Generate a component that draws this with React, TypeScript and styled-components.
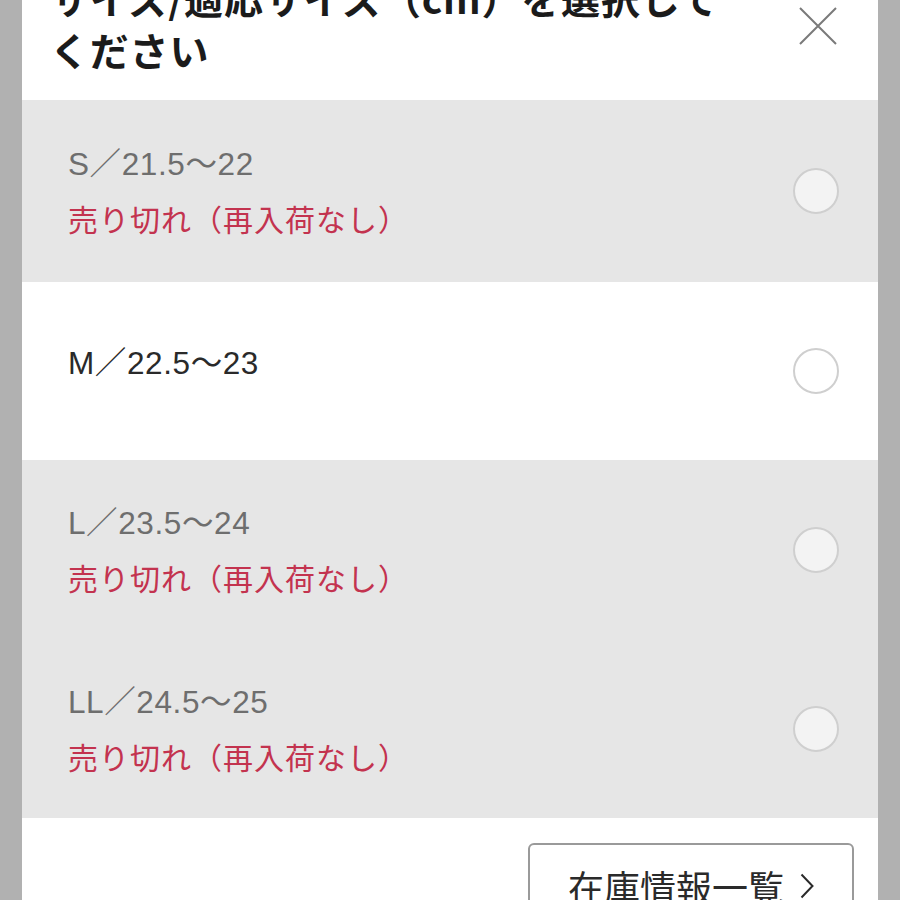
import React from "react";
import styled, { createGlobalStyle } from "styled-components";

const Global = createGlobalStyle`
  html, body { margin: 0; padding: 0; background: #b1b1b1; }
  body { font-family: "Noto Sans CJK JP", "Noto Sans", sans-serif; }
`;

const Screen = styled.div`
  height: 900px;
  overflow: hidden;
  background: #b1b1b1;
  padding: 0 22px;
`;

const Panel = styled.div`
  margin-top: -29px;
  background: #ffffff;
  display: flex;
  flex-direction: column;
`;

const Header = styled.div`
  display: flex;
  justify-content: space-between;
  align-items: flex-start;
  padding: 0 41px 25px 28px;
`;

const Title = styled.h2`
  margin: 0;
  font-size: 39px;
  line-height: 52px;
  font-weight: 700;
  color: #1b1b1b;
  white-space: pre-line;
  letter-spacing: 0.8px;
`;

const CloseButton = styled.button`
  margin-top: 36px;
  width: 38px;
  height: 38px;
  padding: 0;
  border: none;
  background: transparent;
  display: flex;
  flex-shrink: 0;
`;

const Row = styled.label<{ $disabled?: boolean; $h: number }>`
  display: flex;
  align-items: center;
  justify-content: space-between;
  height: ${(p) => p.$h}px;
  padding: 0 39px 0 46px;
  background: ${(p) => (p.$disabled ? "#e6e6e6" : "#ffffff")};
`;

const Info = styled.div`
  display: flex;
  flex-direction: column;
  gap: 14px;
`;

const SizeLabel = styled.div<{ $disabled?: boolean; $single?: boolean }>`
  font-family: "Liberation Sans", "Noto Sans CJK JP", sans-serif;
  font-size: 31.5px;
  line-height: 40px;
  letter-spacing: 0.6px;
  color: ${(p) => (p.$disabled ? "#6e6e6e" : "#2a2a2a")};
  margin-bottom: ${(p) => (p.$single ? "17px" : "0")};
`;

const SoldOut = styled.div`
  font-size: 30px;
  line-height: 40px;
  letter-spacing: 1px;
  color: #c3334f;
`;

const Radio = styled.span<{ $disabled?: boolean }>`
  width: 46px;
  height: 46px;
  box-sizing: border-box;
  border-radius: 50%;
  border: 2px solid #cfcfcf;
  background: ${(p) => (p.$disabled ? "#f3f3f3" : "#ffffff")};
  flex-shrink: 0;
`;

const Footer = styled.div`
  display: flex;
  justify-content: flex-end;
  padding: 25px 24px 0 0;
`;

const StockButton = styled.button`
  width: 326px;
  height: 86px;
  box-sizing: border-box;
  border: 2px solid #9a9a9a;
  border-radius: 6px;
  background: #ffffff;
  display: flex;
  align-items: center;
  justify-content: center;
  gap: 16px;
  font-family: "Noto Sans CJK JP", sans-serif;
  font-size: 36px;
  color: #2a2a2a;
  padding: 0;
`;

type Size = { label: string; soldOut: boolean; h: number };

const sizes: Size[] = [
  { label: "S／21.5〜22", soldOut: true, h: 182 },
  { label: "M／22.5〜23", soldOut: false, h: 178 },
  { label: "L／23.5〜24", soldOut: true, h: 180 },
  { label: "LL／24.5〜25", soldOut: true, h: 178 },
];

export default function App() {
  return (
    <>
      <Global />
      <Screen>
        <Panel>
          <Header>
            <Title>{"サイズ/適応サイズ（cm）を選択して\nください"}</Title>
            <CloseButton aria-label="閉じる">
              <svg width="38" height="38" viewBox="0 0 38 38">
                <path d="M1 1 L37 37 M37 1 L1 37" stroke="#7a7a7a" strokeWidth="2" fill="none" />
              </svg>
            </CloseButton>
          </Header>
          {sizes.map((s) => (
            <Row key={s.label} $disabled={s.soldOut} $h={s.h}>
              <Info>
                <SizeLabel $disabled={s.soldOut} $single={!s.soldOut}>
                  {s.label}
                </SizeLabel>
                {s.soldOut && <SoldOut>売り切れ（再入荷なし）</SoldOut>}
              </Info>
              <Radio $disabled={s.soldOut} />
            </Row>
          ))}
          <Footer>
            <StockButton>
              在庫情報一覧
              <svg width="14" height="26" viewBox="0 0 14 26">
                <path d="M1.5 1.5 L12.5 13 L1.5 24.5" stroke="#2a2a2a" strokeWidth="2" fill="none" />
              </svg>
            </StockButton>
          </Footer>
        </Panel>
      </Screen>
    </>
  );
}
